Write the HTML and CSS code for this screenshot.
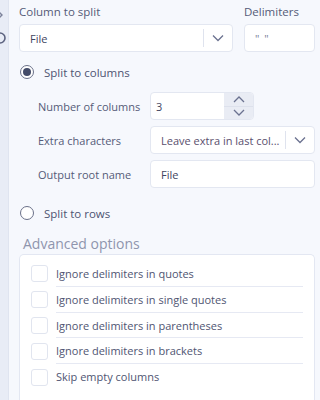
FILE: index.html
```html
<!DOCTYPE html>
<html>
<head>
<meta charset="utf-8">
<link rel="stylesheet" href="styles.css">
</head>
<body>
<div class="app">
  <aside class="rail">
    <svg class="rail-icons" width="16" height="60" viewBox="0 0 16 60">
      <path d="M6 11 L10 15 L6 19" fill="none" stroke="#7b819a" stroke-width="1.4"/>
      <circle cx="8" cy="38" r="5" fill="none" stroke="#5d6380" stroke-width="1.6"/>
    </svg>
  </aside>
  <main class="panel">
    <div class="top-row">
      <div class="field">
        <label class="label">Column to split</label>
        <div class="select">
          <span class="select-value">File</span>
          <span class="select-btn"><svg width="12" height="8" viewBox="0 0 12 8"><path d="M1 1.5 L6 6.5 L11 1.5" fill="none" stroke="#6b7290" stroke-width="1.3"/></svg></span>
        </div>
      </div>
      <div class="field">
        <label class="label">Delimiters</label>
        <div class="input delim">" "</div>
      </div>
    </div>

    <div class="radio-row first">
      <span class="radio checked"></span>
      <span class="radio-label">Split to columns</span>
    </div>

    <div class="sub-form">
      <span class="sub-label">Number of columns</span>
      <div class="number">
        <span class="number-value">3</span>
        <span class="spinner">
          <span class="spin"><svg width="12" height="7" viewBox="0 0 12 7"><path d="M1 6 L6 1 L11 6" fill="none" stroke="#6b7290" stroke-width="1.3"/></svg></span>
          <span class="spin"><svg width="12" height="7" viewBox="0 0 12 7"><path d="M1 1 L6 6 L11 1" fill="none" stroke="#6b7290" stroke-width="1.3"/></svg></span>
        </span>
      </div>
      <span class="sub-label">Extra characters</span>
      <div class="select">
        <span class="select-value extra">Leave extra in last col...</span>
        <span class="select-btn"><svg width="12" height="8" viewBox="0 0 12 8"><path d="M1 1.5 L6 6.5 L11 1.5" fill="none" stroke="#6b7290" stroke-width="1.3"/></svg></span>
      </div>
      <span class="sub-label">Output root name</span>
      <div class="input">File</div>
    </div>

    <div class="radio-row second">
      <span class="radio"></span>
      <span class="radio-label">Split to rows</span>
    </div>

    <div class="adv-title">Advanced options</div>
    <div class="adv-box">
      <div class="check-row"><span class="check"></span><span class="check-label">Ignore delimiters in quotes</span></div>
      <div class="check-row"><span class="check"></span><span class="check-label">Ignore delimiters in single quotes</span></div>
      <div class="check-row"><span class="check"></span><span class="check-label">Ignore delimiters in parentheses</span></div>
      <div class="check-row"><span class="check"></span><span class="check-label">Ignore delimiters in brackets</span></div>
      <div class="check-row"><span class="check"></span><span class="check-label last">Skip empty columns</span></div>
    </div>
  </main>
</div>
</body>
</html>
```
FILE: styles.css
```css
* { box-sizing: border-box; }
html, body { margin: 0; padding: 0; }
body {
  width: 320px;
  height: 400px;
  overflow: hidden;
  background: #f6f8fd;
  font-family: "Open Sans", "Noto Sans", sans-serif;
  font-size: 11px;
  color: #555b78;
}
.app { display: flex; height: 400px; }
.rail {
  width: 9px;
  flex: none;
  background: #e8ecf6;
  border-right: 1px solid #dfe4f0;
  overflow: hidden;
}
.rail-icons { display: block; margin-left: -8px; }
.panel { flex: 1; min-width: 0; padding: 4px 5px 0 10px; }
.top-row {
  display: grid;
  grid-template-columns: minmax(0, 1fr) 71px;
  column-gap: 11px;
}
.field { display: flex; flex-direction: column; gap: 4px; min-width: 0; }
.label { line-height: 16px; height: 16px; font-size: 11.5px; }
.select, .input, .number {
  height: 28px;
  min-width: 0;
  background: #fff;
  border: 1px solid #e3e7f1;
  border-radius: 4px;
  display: flex;
  align-items: center;
}
.select-value { flex: 1; min-width: 0; padding-left: 10px; color: #3f4560; white-space: nowrap; overflow: hidden; }
.select-value.extra { color: #5a4f6e; }
.select-btn {
  width: 29px;
  flex: none;
  height: 18px;
  border-left: 1px solid #dfe3ee;
  display: flex;
  align-items: center;
  justify-content: center;
}
.input { padding-left: 10px; color: #3f4560; }
.delim { color: #7a8099; letter-spacing: 1px; }
.radio-row { display: flex; align-items: center; gap: 10px; height: 24px; padding-left: 1px; }
.radio-row.first { margin-top: 8px; }
.radio-row.second { margin-top: 13px; }
.radio {
  width: 14px; height: 14px;
  border-radius: 50%;
  border: 1.5px solid #6a7089;
  background: #fff;
  flex: none;
  display: flex; align-items: center; justify-content: center;
}
.radio.checked::after {
  content: "";
  width: 8px; height: 8px; border-radius: 50%;
  background: #434b68;
}
.radio-label { color: #4e5472; font-size: 11.5px; }
.sub-form {
  margin-top: 8px;
  padding-left: 19px;
  display: grid;
  grid-template-columns: 112px minmax(0, 1fr);
  row-gap: 6px;
  align-items: center;
}
.sub-label { color: #555b78; white-space: nowrap; }
.number { width: 104px; height: 28px; overflow: hidden; padding: 0; }
.number-value { flex: 1; padding-left: 5px; color: #3f4560; }
.spinner {
  width: 29px; height: 100%;
  background: #e9ecf4;
  display: flex; flex-direction: column;
}
.spin { flex: 1; display: flex; align-items: center; justify-content: center; }
.spin + .spin { border-top: 1px solid #dde1ec; }
.adv-title {
  margin-top: 9px;
  padding-left: 4px;
  font-size: 14px;
  line-height: 20px;
  color: #8f95ad;
}
.adv-box {
  background: #fff;
  border: 1px solid #e3e7f2;
  border-bottom: none;
  border-radius: 5px 5px 0 0;
  padding: 6px 11px 20px 11px;
  height: 160px;
}
.check-row { display: flex; align-items: center; gap: 8px; height: 25.8px; }
.check {
  width: 17px; height: 17px; flex: none;
  border: 1px solid #e1e5ef;
  border-radius: 3px;
  background: #fff;
}
.check-label {
  flex: 1;
  min-width: 0;
  height: 25.8px;
  line-height: 25px;
  border-bottom: 1px solid #e6e9f3;
  color: #4f5572;
  white-space: nowrap;
}
.check-label.last { border-bottom: none; }
```
